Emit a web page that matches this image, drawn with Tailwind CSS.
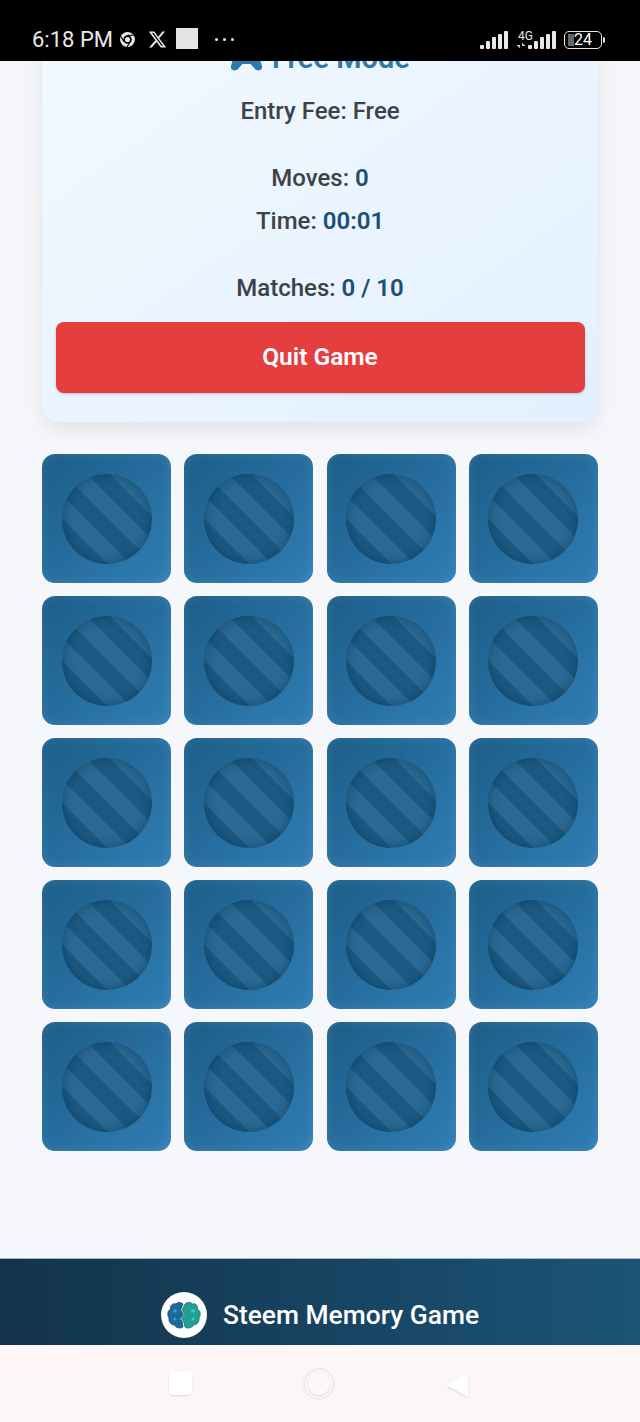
<!DOCTYPE html>
<html lang="en">
<head>
  <meta charset="UTF-8" />
  <title>Steem Memory Game</title>
  <script src="https://cdn.jsdelivr.net/npm/@tailwindcss/browser@4"></script>
</head>
<body class="w-[640px] h-[1422px] overflow-hidden flex flex-col bg-[#f5f7fb] font-['Roboto',sans-serif]">

  <!-- status bar -->
  <div class="h-[61px] shrink-0 bg-black text-[#e8e8e8] relative z-10 flex items-center pl-[32px] pr-[35px] pt-[18px]">
    <span class="text-[22px] leading-none">6:18 PM</span>
    <svg class="w-[17px] h-[17px] ml-[6px]" viewBox="0 0 24 24">
      <circle cx="12" cy="12" r="10.5" fill="#e8e8e8"/>
      <circle cx="12" cy="12" r="6" fill="#000"/>
      <circle cx="12" cy="12" r="3.6" fill="#e8e8e8"/>
      <path d="M12 6h10M7 15l-5-8M16 15l-5 8" stroke="#000" stroke-width="1.5"/>
    </svg>
    <svg class="w-[19px] h-[19px] ml-[12px]" viewBox="0 0 24 24" fill="#e8e8e8">
      <path d="M18.2 2h3.4l-7.4 8.5L23 22h-6.800l-5.300-7-6.100 7H1.400l7.900-9.100L1 2h7l4.800 6.400zm-1.200 18h1.900L7 3.900H5z"/>
    </svg>
    <div class="w-[22px] h-[21px] ml-[9px] -mt-[2px] bg-[#e4e4e4]"></div>
    <div class="flex gap-[5px] ml-[17px]">
      <div class="w-[3px] h-[3px] rounded-full bg-[#e8e8e8]"></div>
      <div class="w-[3px] h-[3px] rounded-full bg-[#e8e8e8]"></div>
      <div class="w-[3px] h-[3px] rounded-full bg-[#e8e8e8]"></div>
    </div>
    <div class="ml-auto flex items-end">
      <div class="flex items-end gap-[2px]">
        <div class="w-[4px] h-[4px] rounded-[1px] bg-[#e8e8e8]"></div>
        <div class="w-[4px] h-[8px] rounded-[1px] bg-[#e8e8e8]"></div>
        <div class="w-[4px] h-[12px] rounded-[1px] bg-[#e8e8e8]"></div>
        <div class="w-[4px] h-[15px] rounded-[1px] bg-[#e8e8e8]"></div>
        <div class="w-[4px] h-[18px] rounded-[1px] bg-[#e8e8e8]"></div>
      </div>
      <div class="flex flex-col items-start ml-[8px] w-[14px]">
        <span class="text-[12px] leading-[11px] ml-[2px]">4G</span>
        <svg class="w-[10px] h-[7px]" viewBox="0 0 13 7" fill="#e8e8e8"><path d="M5 0v3H1l4 4zM8 7V4h4L8 0z"/></svg>
      </div>
      <div class="flex items-end gap-[2px] -ml-[2px]">
        <div class="w-[4px] h-[4px] rounded-[1px] bg-[#e8e8e8]"></div>
        <div class="w-[4px] h-[8px] rounded-[1px] bg-[#e8e8e8]"></div>
        <div class="w-[4px] h-[12px] rounded-[1px] bg-[#e8e8e8]"></div>
        <div class="w-[4px] h-[15px] rounded-[1px] bg-[#e8e8e8]"></div>
        <div class="w-[4px] h-[18px] rounded-[1px] bg-[#e8e8e8]"></div>
      </div>
      <div class="flex items-center ml-[8px]">
        <div class="relative w-[38px] h-[18px] border-[1.5px] border-[#e8e8e8] rounded-[5px] flex items-center justify-center">
          <div class="absolute left-[3px] top-[2px] bottom-[2px] w-[6px] bg-[#666]"></div>
          <span class="relative text-[16px] leading-none text-white">24</span>
        </div>
        <div class="w-[2px] h-[6px] ml-[1px] bg-[#e8e8e8] rounded-r"></div>
      </div>
    </div>
  </div>

  <!-- scrolled page -->
  <main class="flex-1 overflow-hidden px-[42px]">
    <section class="-mt-[28px] h-[389px] rounded-[18px] bg-linear-to-br from-[#f2f9ff] to-[#e2f0ff] shadow-[0_7px_22px_rgba(0,0,0,0.09)] px-[13.500px] flex flex-col items-center text-[24px] font-medium text-[#3c4248]">
      <h2 class="flex items-center gap-[9px] h-[36px] mt-[7px] text-[29px] leading-none font-semibold text-[#2b7aa8]">
        <svg class="w-[33px] h-[24px] mt-[2px]" viewBox="0 0 33 24" fill="#2b7aa8">
          <path d="M10 0h13c2.500 0 4 1.500 5 5l4 14c1 4-4 6-7 3l-4.500-5h-8L8 22c-3 3-8 1-7-3L5 5c1-3.500 2.500-5 5-5z"/>
        </svg>
        Free Mode
      </h2>
      <p class="mt-[19px] leading-[32px]">Entry Fee: Free</p>
      <p class="mt-[35px] leading-[32px]">Moves: <span class="font-semibold text-[#1b4f72]">0</span></p>
      <p class="mt-[11px] leading-[32px]">Time: <span class="font-semibold text-[#1b4f72]">00:01</span></p>
      <p class="mt-[35px] leading-[32px]">Matches: <span class="font-semibold text-[#1b4f72]">0 / 10</span></p>
      <button class="w-full h-[71px] mt-[18px] shrink-0 rounded-[8px] bg-[#e53e3e] text-white text-[24.500px] font-semibold shadow-[0_1px_3px_rgba(0,0,0,0.2)]">Quit Game</button>
    </section>

    <div id="board" class="grid grid-cols-4 gap-x-[13.300px] gap-y-[13px] mt-[32px]"></div>
  </main>

  <!-- footer -->
  <footer class="h-[87px] shrink-0 bg-linear-to-r from-[#13334b] to-[#1b5478] border-t border-[#aab8c4] flex items-start justify-center gap-[16px] pt-[33px] text-white text-[26.400px] font-medium">
    <div class="w-[46px] h-[46px] rounded-full bg-white flex items-center justify-center">
      <svg class="w-[34px] h-[28px]" viewBox="0 0 34 28" stroke-width="0.8">
        <path d="M16 3C14 1 10 1 9 3 5 2 3 5 3.500 8 .5 10 0 14 2 17c-.5 4 2 7 5.500 7 1.500 3 5.500 4 8.500 2l-1-6-2.500-2 4-4.500-3-4.500z" fill="#1b6a9c" stroke="#154a70"/>
        <path d="M18 3c2-2 6-2 7.500 0C29 2 31 5 30.500 8c3 2 3.500 6 1.500 9 .5 4-2 7-5.500 7-1.500 3-5.500 4-8.500 2l-1.500-6-2.500-2.500 4-4-3-4.500z" fill="#1fa294" stroke="#14726e"/>
        <circle cx="8" cy="10" r="1.800" fill="#4c93bd"/><circle cx="8" cy="18" r="1.500" fill="#4c93bd"/>
        <circle cx="26" cy="10" r="1.800" fill="#58c2b4"/><circle cx="26" cy="18" r="1.500" fill="#58c2b4"/>
      </svg>
    </div>
    <span class="leading-[46px]">Steem Memory Game</span>
  </footer>

  <!-- android nav bar -->
  <nav class="h-[77px] shrink-0 bg-[#fdf6f6] relative z-10 flex items-start pt-[27px]">
    <div class="w-[23px] h-[23px] ml-[169px] rounded-[4px] bg-white shadow-[0_1px_2px_rgba(0,0,0,0.12)]"></div>
    <div class="w-[32px] h-[32px] ml-[111px] -mt-[4px] rounded-full border-2 border-[#f1eaea] flex items-center justify-center">
      <div class="w-[22px] h-[22px] rounded-full bg-[#fdf9f9] shadow-[0_1px_2px_rgba(0,0,0,0.15)]"></div>
    </div>
    <svg class="w-[25px] h-[27px] ml-[110px]" viewBox="0 0 25 27" fill="#fff" style="filter:drop-shadow(0 1px 1px rgba(0,0,0,.12))">
      <path d="M23 1v24L1 13z"/>
    </svg>
  </nav>

  <script>
    // 20 face-down cards
    const board = document.getElementById("board");
    for (let i = 0; i < 20; i++) {
      const card = document.createElement("div");
      card.className = "h-[129px] rounded-[13px] bg-linear-to-br from-[#1c5e88] to-[#2f7db5] shadow-[inset_0_0_12px_rgba(255,255,255,0.1)] flex items-center justify-center";
      card.innerHTML = '<div class="w-[90px] h-[90px] rounded-full bg-[repeating-linear-gradient(45deg,#2a6a94_0px,#2a6a94_16.200px,#1b5a82_16.200px,#1b5a82_32.500px)] shadow-[inset_0_0_12px_rgba(5,35,65,0.45)]"></div>';
      board.appendChild(card);
    }
  </script>
</body>
</html>
